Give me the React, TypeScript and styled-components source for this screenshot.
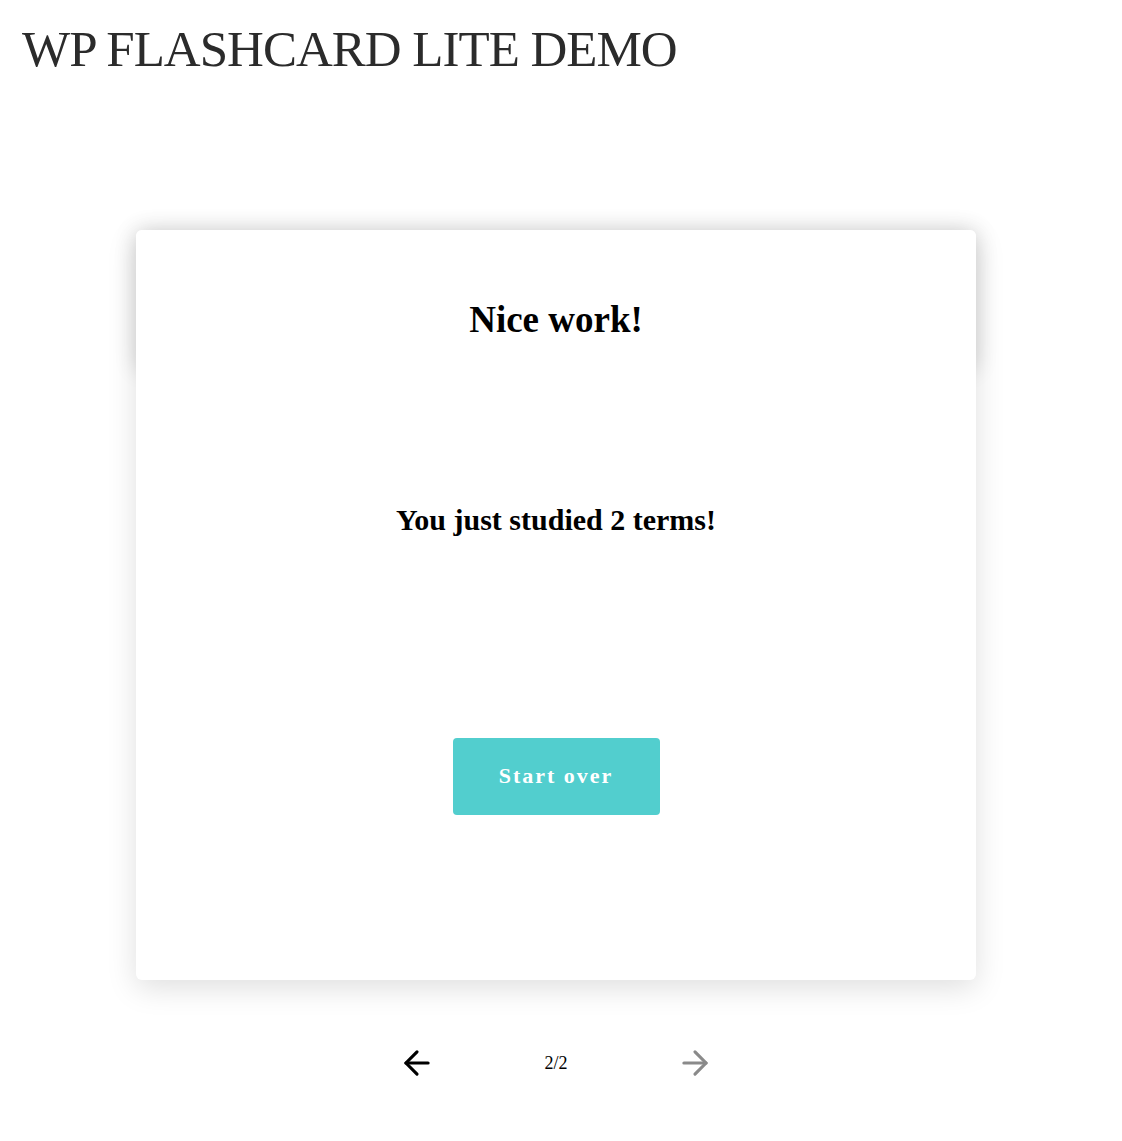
import React from 'react';
import styled, { createGlobalStyle } from 'styled-components';
import { ArrowLeft, ArrowRight } from 'lucide-react';

const GlobalStyle = createGlobalStyle`
  html {
    background: #ffffff;
  }
  body {
    margin: 0;
    padding: 0;
    font-family: "Liberation Serif", "Times New Roman", serif;
    color: #000;
  }
`;

const Page = styled.div`
  padding: 21px 0 40px;
`;

const PageTitle = styled.h1`
  margin: 0;
  padding: 0 22px;
  font-size: 51px;
  line-height: 56px;
  font-weight: 400;
  letter-spacing: -1px;
  color: #2b2b2b;
`;

const Stage = styled.main`
  padding: 153px 146px 0 136px;
`;

const Card = styled.section`
  position: relative;
  box-sizing: border-box;
  height: 750px;
  padding-top: 68px;
  display: flex;
  flex-direction: column;
  align-items: center;
  background: #fff;
  border-radius: 6px;
  box-shadow: 0 8px 30px rgba(0, 0, 0, 0.13);

  &::before {
    content: '';
    position: absolute;
    top: 0;
    left: 0;
    right: 0;
    height: 140px;
    border-radius: 6px;
    z-index: -1;
    box-shadow: 0 0 22px rgba(0, 0, 0, 0.16);
  }
`;

const Heading = styled.h2`
  margin: 0;
  font-size: 37px;
  line-height: 44px;
  font-weight: 700;
`;

const Message = styled.p`
  margin: 160px 0 0;
  font-size: 30px;
  line-height: 36px;
  font-weight: 700;
`;

const RestartButton = styled.button`
  margin-top: 200px;
  width: 207px;
  height: 77px;
  display: flex;
  align-items: center;
  justify-content: center;
  padding: 0 0 2px;
  border: none;
  border-radius: 4px;
  background: #52cece;
  color: #fff;
  font-family: "Liberation Serif", "Times New Roman", serif;
  font-size: 22px;
  font-weight: 700;
  letter-spacing: 2px;
  cursor: pointer;
`;

const Pager = styled.nav`
  margin-top: 63px;
  display: grid;
  grid-template-columns: repeat(3, 139px);
  justify-content: center;
  justify-items: center;
  align-items: center;
  height: 40px;
`;

const NavButton = styled.button<{ $disabled?: boolean }>`
  display: flex;
  align-items: center;
  justify-content: center;
  padding: 0;
  border: none;
  background: none;
  color: ${(p) => (p.$disabled ? '#8a8a8a' : '#000')};
  cursor: ${(p) => (p.$disabled ? 'default' : 'pointer')};
`;

const Counter = styled.span`
  font-size: 18px;
  line-height: 20px;
  color: #000;
`;

const App = () => {
  const studied = 2;
  const total = 2;

  return (
    <Page>
      <GlobalStyle />
      <PageTitle>WP FLASHCARD LITE DEMO</PageTitle>
      <Stage>
        <Card>
          <Heading>Nice work!</Heading>
          <Message>You just studied {studied} terms!</Message>
          <RestartButton>Start over</RestartButton>
        </Card>
        <Pager>
          <NavButton aria-label="Previous">
            <ArrowLeft size={38} strokeWidth={2} />
          </NavButton>
          <Counter>
            {total}/{total}
          </Counter>
          <NavButton $disabled aria-label="Next">
            <ArrowRight size={38} strokeWidth={2} />
          </NavButton>
        </Pager>
      </Stage>
    </Page>
  );
};

export default App;
